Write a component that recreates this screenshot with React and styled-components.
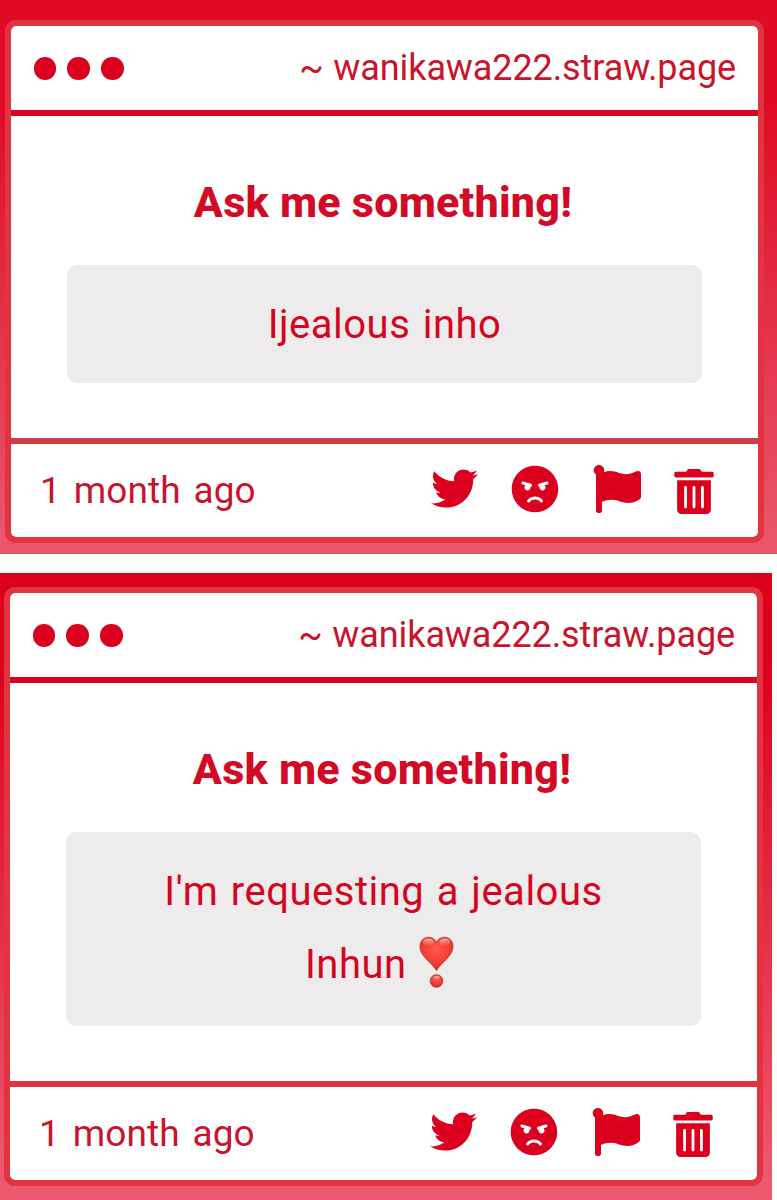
import React from "react";
import styled, { createGlobalStyle } from "styled-components";
import { FaTwitter, FaAngry, FaFlag, FaTrashAlt } from "react-icons/fa";

const GlobalStyle = createGlobalStyle`
* {
    box-sizing: border-box;
}
body {
    margin: 0;
    background-color: #ffffff;
    font-family: Roboto, 'Liberation Sans', sans-serif;
}
`

const Page = styled.main`
display: flex;
flex-direction: column;
gap: 19px;
width: 777px;
height: 1200px;
overflow: hidden;
`

const Panel = styled.section`
width: ${(props) => props.$width}px;
height: ${(props) => props.$height}px;
padding: ${(props) => props.$padding};
background: ${(props) => props.$background};
`

const Card = styled.article`
display: flex;
flex-direction: column;
width: 759px;
height: ${(props) => props.$height}px;
border: 6px solid #e13340;
border-radius: 11px;
background-color: #ffffff;
background-clip: padding-box;
color: #c8142d;
`

const Header = styled.header`
display: flex;
align-items: center;
justify-content: space-between;
height: 90px;
padding: 1px 22px 0 22.7px;
border-bottom: 6px solid #d9041f;
`

const Dots = styled.div`
display: flex;
gap: 11.2px;
`

const Dot = styled.span`
width: 22.5px;
height: 22.5px;
border-radius: 50%;
background-color: #dc001f;
`

const Site = styled.span`
padding-bottom: 2px;
font-size: 36px;
line-height: 42px;
letter-spacing: -0.1px;
word-spacing: 1px;
white-space: nowrap;
`

const Content = styled.div`
display: flex;
flex: 1;
flex-direction: column;
align-items: center;
padding-top: 61px;
`

const Title = styled.h1`
margin: 0;
padding-right: 3px;
font-size: 43px;
font-weight: 800;
line-height: 50px;
letter-spacing: 0.25px;
color: #d20a25;
white-space: nowrap;
`

const Message = styled.p`
width: 635px;
margin: 38px 0 0;
padding: 23px 60px ${(props) => props.$bottom}px;
border-radius: 10px;
background-color: #edebec;
color: #d4061f;
font-size: 40px;
line-height: 73px;
letter-spacing: 0.5px;
word-spacing: 2px;
text-align: center;
`

const HeartMark = styled.svg`
width: 35px;
height: 52px;
margin: -10px 8px -10px 0;
vertical-align: 0;
`

const Footer = styled.footer`
display: flex;
align-items: center;
justify-content: space-between;
height: 99px;
padding: 0 44px 0 29px;
border-top: 6px solid ${(props) => props.$line};
`

const Time = styled.time`
font-size: 37px;
line-height: 44px;
letter-spacing: 0.1px;
word-spacing: 3.5px;
white-space: nowrap;
`

const Actions = styled.div`
display: flex;
align-items: center;
gap: 33.5px;
padding-bottom: 4px;
color: #dc001f;
`

const TrashIcon = styled(FaTrashAlt)`
width: 40px;
height: 45px;
margin-top: 6px;
`

const HeartExclamation = () => (
    <HeartMark viewBox="0 0 36 53">
        <defs>
            <radialGradient id="heart" cx="50%" cy="35%" r="65%">
                <stop offset="0" stopColor="#ff5a4c" />
                <stop offset="0.65" stopColor="#f13d35" />
                <stop offset="1" stopColor="#c62825" />
            </radialGradient>
            <linearGradient id="shine" x1="0" y1="0" x2="0" y2="1">
                <stop offset="0" stopColor="#ffffff" stopOpacity="0.55" />
                <stop offset="1" stopColor="#ffffff" stopOpacity="0" />
            </linearGradient>
        </defs>
        <path d="M18 35.500C14.500 28 1 21 1 10.500C1 4.500 5 1 10 1C14 1 17 3.500 18 6.500C19 3.500 22 1 26 1C31 1 35 4.500 35 10.500C35 21 21.500 28 18 35.500Z" fill="url(#heart)" stroke="#b9322e" strokeWidth="0.800" />
        <ellipse cx="9.500" cy="6" rx="5.500" ry="3.700" fill="url(#shine)" />
        <ellipse cx="26.500" cy="6" rx="5.500" ry="3.700" fill="url(#shine)" />
        <circle cx="18" cy="46" r="6.500" fill="url(#heart)" stroke="#b9322e" strokeWidth="0.800" />
        <ellipse cx="18" cy="43" rx="3.700" ry="2" fill="url(#shine)" />
    </HeartMark>
)

const AskCard = ({ height, line, bottom, children }) => (
    <Card $height={height}>
        <Header>
            <Dots>
                <Dot />
                <Dot />
                <Dot />
            </Dots>
            <Site>~ wanikawa222.straw.page</Site>
        </Header>
        <Content>
            <Title>Ask me something!</Title>
            <Message $bottom={bottom}>{children}</Message>
        </Content>
        <Footer $line={line}>
            <Time>1 month ago</Time>
            <Actions>
                <FaTwitter size={47} />
                <FaAngry size={48} />
                <FaFlag size={48} />
                <TrashIcon />
            </Actions>
        </Footer>
    </Card>
)

const App = () => (
    <>
        <GlobalStyle />
        <Page>
            <Panel
                $width={777}
                $height={554}
                $padding="20px 0 0 5px"
                $background="linear-gradient(#df0a24 0%, #df0a24 18%, #ea5569 96%)"
            >
                <AskCard height={523} line="#d23c47" bottom={22}>Ijealous inho</AskCard>
            </Panel>
            <Panel
                $width={772}
                $height={627}
                $padding="14px 0 0 4px"
                $background="linear-gradient(#dc001d 0%, #dc001d 14%, #ee586e 96%)"
            >
                <AskCard height={599} line="#e13340" bottom={25}>
                    I'm requesting a jealous Inhun <HeartExclamation />
                </AskCard>
            </Panel>
        </Page>
    </>
)

export default App;
